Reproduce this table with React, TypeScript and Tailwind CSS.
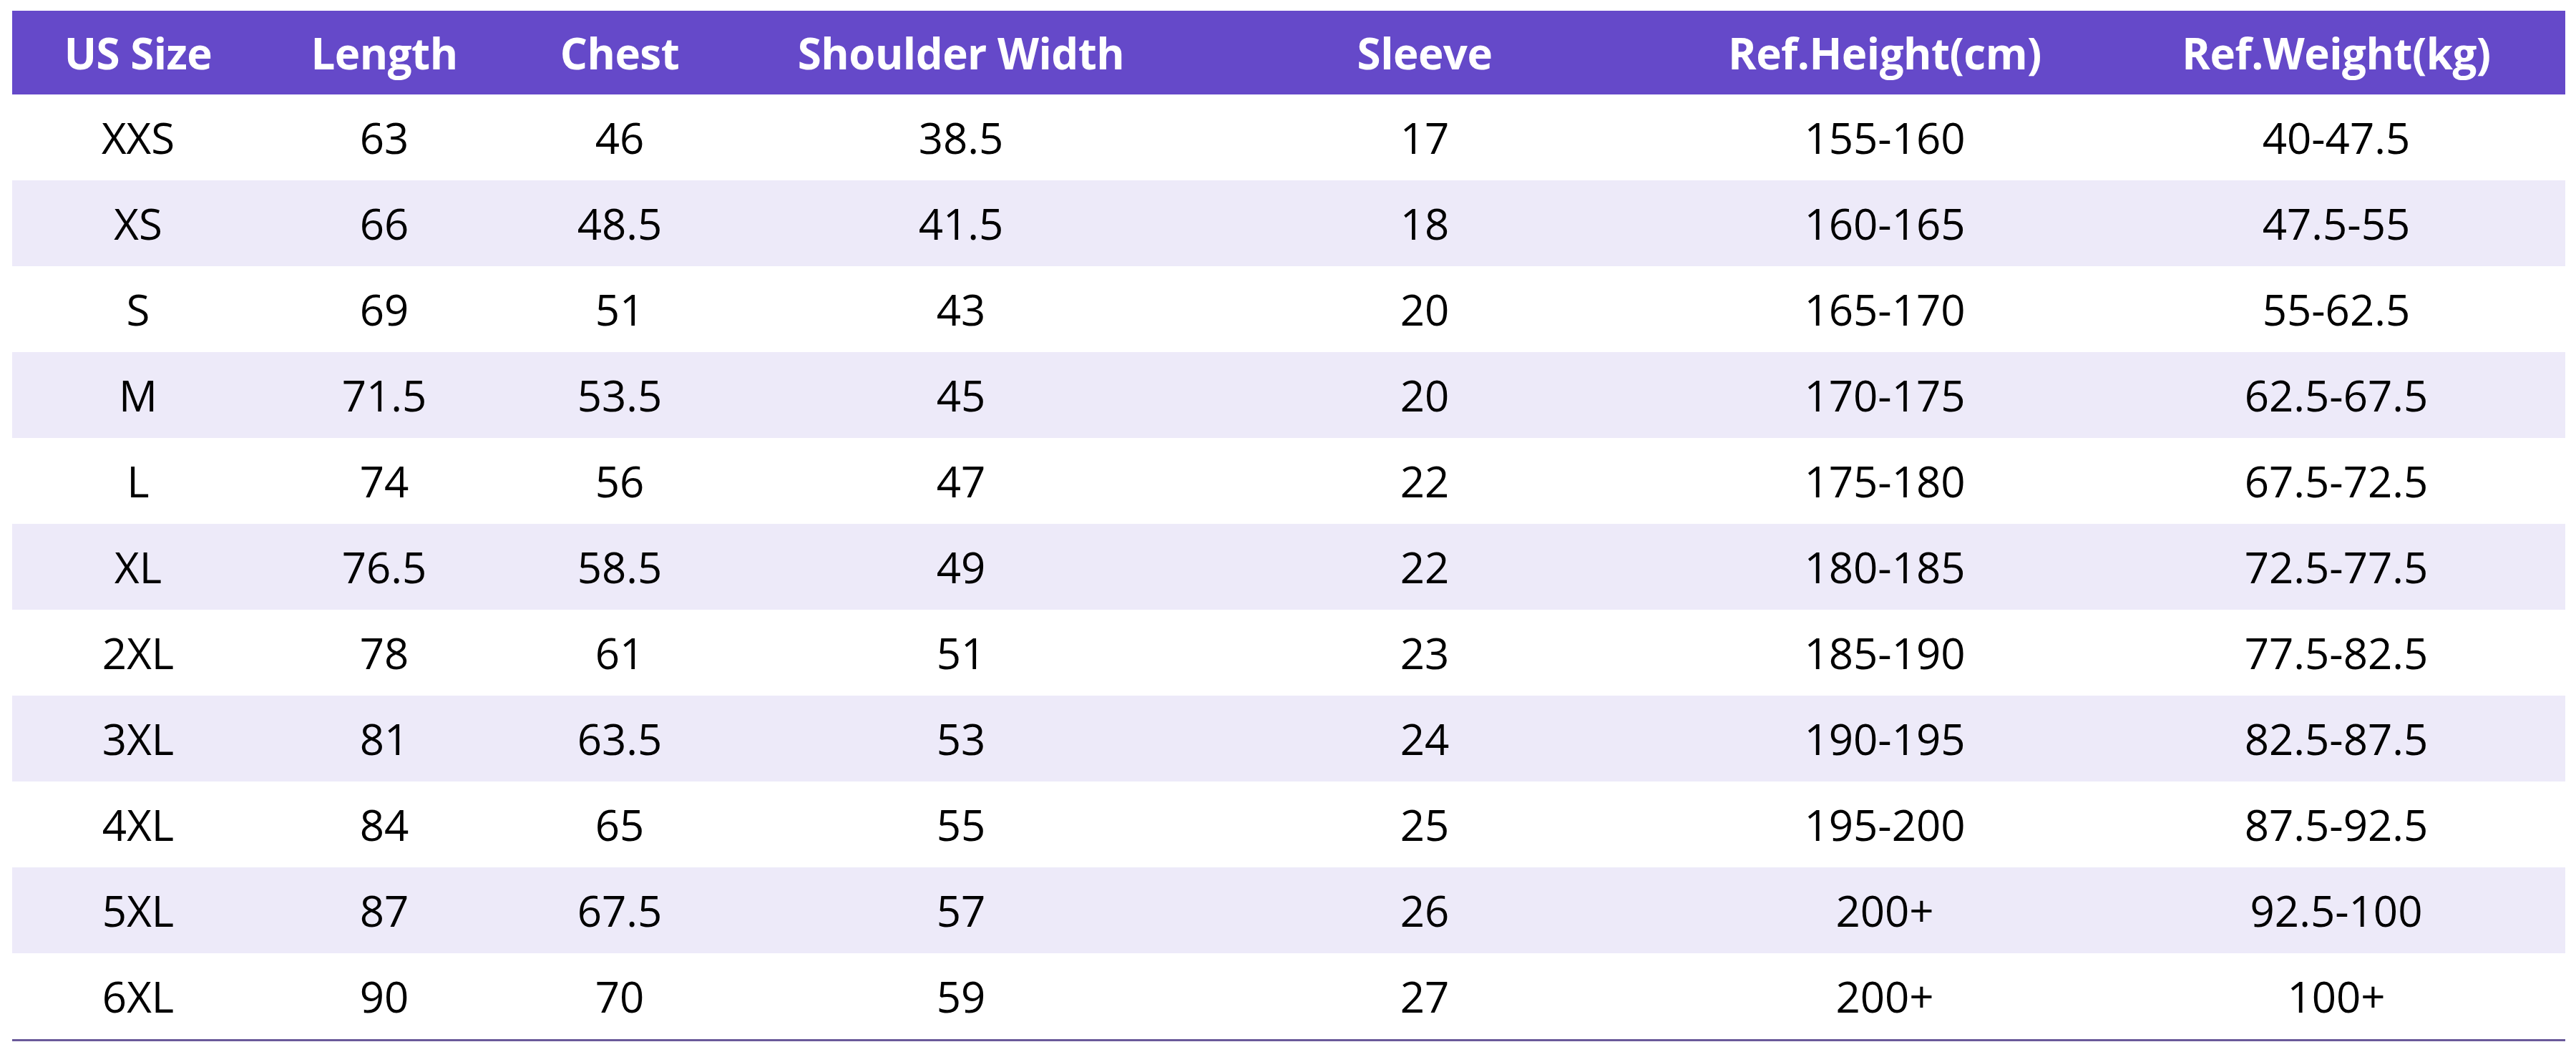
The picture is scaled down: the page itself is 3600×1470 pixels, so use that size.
import React from "react";

const headers = ["US Size", "Length", "Chest", "Shoulder Width", "Sleeve", "Ref.Height(cm)", "Ref.Weight(kg)"];

const rows: string[][] = [
  ["XXS", "63", "46", "38.5", "17", "155-160", "40-47.5"],
  ["XS", "66", "48.5", "41.5", "18", "160-165", "47.5-55"],
  ["S", "69", "51", "43", "20", "165-170", "55-62.5"],
  ["M", "71.5", "53.5", "45", "20", "170-175", "62.5-67.5"],
  ["L", "74", "56", "47", "22", "175-180", "67.5-72.5"],
  ["XL", "76.5", "58.5", "49", "22", "180-185", "72.5-77.5"],
  ["2XL", "78", "61", "51", "23", "185-190", "77.5-82.5"],
  ["3XL", "81", "63.5", "53", "24", "190-195", "82.5-87.5"],
  ["4XL", "84", "65", "55", "25", "195-200", "87.5-92.5"],
  ["5XL", "87", "67.5", "57", "26", "200+", "92.5-100"],
  ["6XL", "90", "70", "59", "27", "200+", "100+"],
];

const gridCols = "grid grid-cols-[352px_336px_322px_632px_664px_622px_1fr]";

export default function App() {
  return (
    <div
      className="w-[3600px] h-[1470px] bg-white pt-[15px] pl-[17px] pr-[15px]"
      style={{ fontFamily: '"Open Sans", "Noto Sans", sans-serif' }}
    >
      <div className={`${gridCols} h-[117px] bg-[#6549c9] text-white font-bold text-[60px]`}>
        {headers.map((h) => (
          <div key={h} className="flex items-center justify-center tracking-[-0.5px]">
            {h}
          </div>
        ))}
      </div>
      {rows.map((r, i) => (
        <div
          key={r[0]}
          className={`${gridCols} h-[120px] text-black text-[60px] ${i % 2 === 1 ? "bg-[#edeaf9]" : "bg-white"}`}
        >
          {r.map((c, j) => (
            <div key={j} className="flex items-center justify-center">
              {c}
            </div>
          ))}
        </div>
      ))}
      <div className="h-[3px] bg-[#6a5a9a]" />
    </div>
  );
}
